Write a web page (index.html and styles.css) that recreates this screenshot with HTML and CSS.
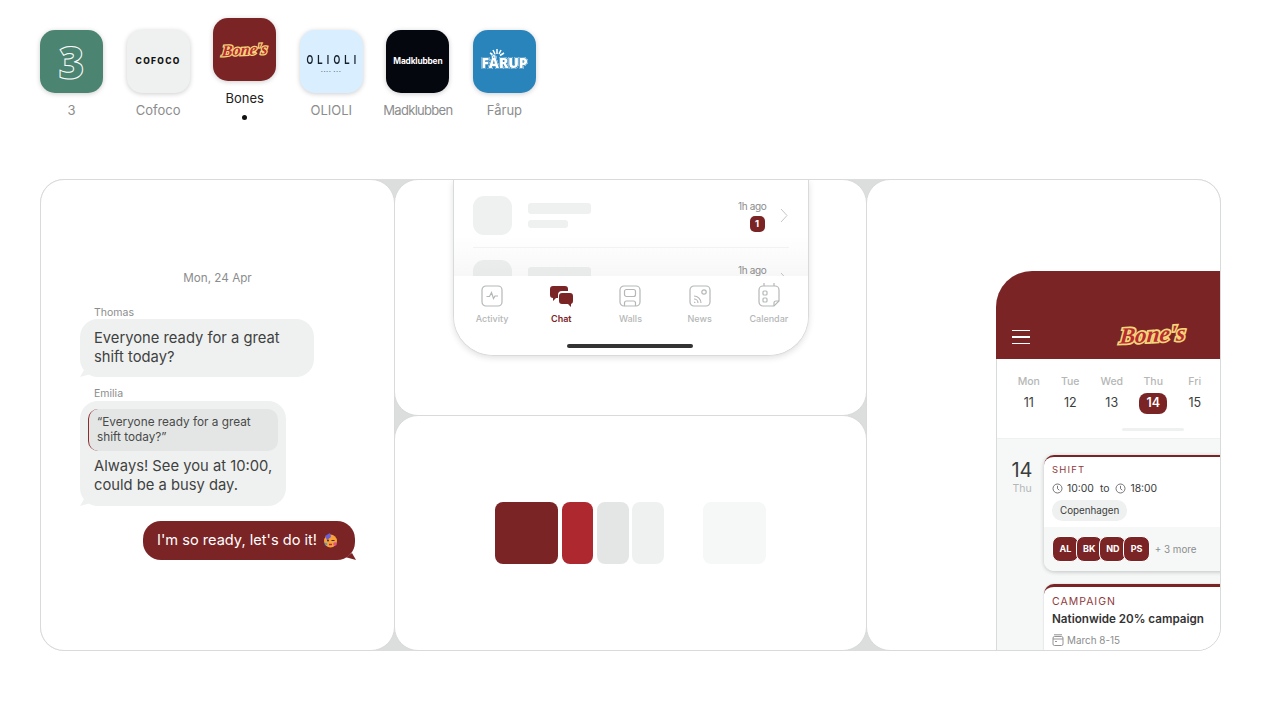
FILE: index.html
```html
<!DOCTYPE html>
<html lang="en">
<head>
<meta charset="utf-8">
<title>Brands</title>
<link rel="stylesheet" href="styles.css">
</head>
<body>
<header class="brands">
  <div class="brand">
    <div class="tile tile-three"><span class="three">3</span></div>
    <span class="brand-name">3</span>
  </div>
  <div class="brand">
    <div class="tile tile-cofoco"><span class="cofoco">COFOCO</span></div>
    <span class="brand-name">Cofoco</span>
  </div>
  <div class="brand brand-active">
    <div class="tile tile-bones"><span class="bones bones-small">Bone's</span></div>
    <span class="brand-name">Bones</span>
    <span class="brand-dot"></span>
  </div>
  <div class="brand">
    <div class="tile tile-olioli"><span class="olioli">OLIOLI</span><span class="olioli-sub">•••• •••</span></div>
    <span class="brand-name">OLIOLI</span>
  </div>
  <div class="brand">
    <div class="tile tile-mad"><span class="mad">Madklubben</span></div>
    <span class="brand-name brand-name-tight">Madklubben</span>
  </div>
  <div class="brand">
    <div class="tile tile-farup">
      <svg class="rays" width="16" height="9" viewBox="0 0 16 9"><path d="M8 1v5M4 2l2 4M12 2l-2 4M1 5l4 2.500M15 5l-4 2.500" stroke="#fff" stroke-width="1.500" fill="none"/></svg>
      <span class="farup">FÅRUP</span>
    </div>
    <span class="brand-name">Fårup</span>
  </div>
</header>

<main class="board">
  <section class="panel panel-chat">
    <div class="chat-date">Mon, 24 Apr</div>
    <div class="sender">Thomas</div>
    <div class="bubble bubble-in bubble-thomas">Everyone ready for a great shift today?</div>
    <div class="sender sender-next">Emilia</div>
    <div class="bubble bubble-in bubble-emilia">
      <div class="quote">“Everyone ready for a great shift today?”</div>
      <div class="reply">Always! See you at 10:00, could be a busy day.</div>
    </div>
    <div class="bubble bubble-out">I'm so ready, let's do it!
      <svg class="emoji" width="15" height="15" viewBox="0 0 15 15"><circle cx="7.500" cy="8" r="6.500" fill="#f7a23b"/><path d="M2 3l5-3 1 4-4 3z" fill="#6a5fd8"/><circle cx="5" cy="7.500" r="1" fill="#4a2a20"/><path d="M8.500 7.500h3" stroke="#4a2a20" stroke-width="1"/><path d="M6 11.500h3" stroke="#b0303a" stroke-width="1.500"/><circle cx="12" cy="11" r="1.800" fill="#e0508a"/><circle cx="3" cy="11" r="1.300" fill="#3fa7d6"/></svg>
    </div>
  </section>

  <div class="middle">
    <section class="panel panel-phone">
      <div class="phone">
        <div class="list-row">
          <div class="avatar"></div>
          <div class="bars"><div class="bar bar-long"></div><div class="bar bar-short"></div></div>
          <div class="meta"><span class="ago">1h ago</span><span class="badge">1</span></div>
          <svg class="chev" width="8" height="15" viewBox="0 0 8 15"><path d="M1 1l6 6.500-6 6.500" fill="none" stroke="#c4c6c6" stroke-width="1"/></svg>
        </div>
        <div class="list-row list-row-next">
          <div class="avatar"></div>
          <div class="bars"><div class="bar bar-long"></div><div class="bar bar-short"></div></div>
          <div class="meta"><span class="ago">1h ago</span><span class="badge">1</span></div>
          <svg class="chev" width="8" height="15" viewBox="0 0 8 15"><path d="M1 1l6 6.500-6 6.500" fill="none" stroke="#c4c6c6" stroke-width="1"/></svg>
        </div>
        <div class="fade"></div>
        <nav class="tabs">
          <div class="tab">
            <svg width="24" height="24" viewBox="0 0 24 24" fill="none" stroke="#b5b7b7" stroke-width="1.200"><rect x="2" y="2" width="20" height="20" rx="4"/><path d="M6.500 12.500h3l2-4 2 6 1.500-2.500h3"/></svg>
            <span>Activity</span>
          </div>
          <div class="tab tab-on">
            <svg width="24" height="24" viewBox="0 0 24 24" fill="#7b2426"><path d="M4 2h12a3 3 0 0 1 3 3v2h-6a4 4 0 0 0-4 4v3H7l-3 3v-3a3 3 0 0 1-3-3V5a3 3 0 0 1 3-3z"/><path d="M13 9h8a3 3 0 0 1 3 3v5a3 3 0 0 1-2 3v3l-3-3h-6a3 3 0 0 1-3-3v-5a3 3 0 0 1 3-3z"/></svg>
            <span>Chat</span>
          </div>
          <div class="tab">
            <svg width="24" height="24" viewBox="0 0 24 24" fill="none" stroke="#b5b7b7" stroke-width="1.200"><rect x="2" y="2" width="20" height="20" rx="4"/><rect x="6.500" y="5.500" width="11" height="7" rx="2"/><path d="M6.500 22v-3a2 2 0 0 1 2-2h7a2 2 0 0 1 2 2v3"/></svg>
            <span>Walls</span>
          </div>
          <div class="tab">
            <svg width="24" height="24" viewBox="0 0 24 24" fill="none" stroke="#b5b7b7" stroke-width="1.200"><rect x="2" y="2" width="20" height="20" rx="4"/><circle cx="16" cy="8" r="2.200"/><path d="M6 12a7 7 0 0 1 7 7M6 15a4 4 0 0 1 4 4M6 18a1 1 0 0 1 1 1"/></svg>
            <span>News</span>
          </div>
          <div class="tab">
            <svg width="24" height="24" viewBox="0 0 24 24" fill="none" stroke="#b5b7b7" stroke-width="1.200"><path d="M6 2h12a4 4 0 0 1 4 4v11l-5 5H6a4 4 0 0 1-4-4V6a4 4 0 0 1 4-4z"/><path d="M7 -1v3M17 -1v3M22 17h-3a2 2 0 0 0-2 2v3"/><rect x="6" y="7" width="4" height="4" rx="1"/><rect x="6" y="14" width="4" height="4" rx="1"/></svg>
            <span>Calendar</span>
          </div>
        </nav>
        <div class="home-bar"></div>
      </div>
    </section>

    <section class="panel panel-swatches">
      <div class="swatch sw-primary"></div>
      <div class="swatch sw-accent"></div>
      <div class="swatch sw-grey"></div>
      <div class="swatch sw-light"></div>
      <div class="swatch sw-white"></div>
      <div class="swatch sw-pale"></div>
    </section>
  </div>

  <section class="panel panel-calendar">
    <div class="cal-phone">
      <div class="cal-head">
        <div class="burger"><i></i><i></i><i></i></div>
        <span class="bones bones-large">Bone's</span>
      </div>
      <div class="week">
        <div class="day"><span class="day-name">Mon</span><span class="day-num">11</span></div>
        <div class="day"><span class="day-name">Tue</span><span class="day-num">12</span></div>
        <div class="day"><span class="day-name">Wed</span><span class="day-num">13</span></div>
        <div class="day"><span class="day-name">Thu</span><span class="day-num day-on">14</span></div>
        <div class="day"><span class="day-name">Fri</span><span class="day-num">15</span></div>
      </div>
      <div class="scroller"><div class="scroller-thumb"></div></div>
      <div class="agenda">
        <div class="agenda-date"><span class="agenda-num">14</span><span class="agenda-day">Thu</span></div>
        <div class="cards">
          <article class="card">
            <div class="card-body">
              <div class="card-kind">SHIFT</div>
              <div class="times">
                <svg width="11" height="11" viewBox="0 0 11 11" fill="none" stroke="#666" stroke-width=".9"><circle cx="5.500" cy="5.500" r="4.500"/><path d="M5.500 2.800v2.900l1.800 1.500"/></svg>
                <span>10:00</span><span class="to">to</span>
                <svg width="11" height="11" viewBox="0 0 11 11" fill="none" stroke="#666" stroke-width=".9"><circle cx="5.500" cy="5.500" r="4.500"/><path d="M5.500 2.800v2.900l1.800 1.500"/></svg>
                <span>18:00</span>
              </div>
              <span class="place">Copenhagen</span>
            </div>
            <div class="card-foot">
              <span class="person">AL</span><span class="person">BK</span><span class="person">ND</span><span class="person">PS</span>
              <span class="more">+ 3 more</span>
            </div>
          </article>
          <article class="card card-second">
            <div class="card-body">
              <div class="card-kind card-kind-large">CAMPAIGN</div>
              <div class="card-title">Nationwide 20% campaign</div>
              <div class="dates">
                <svg width="12" height="12" viewBox="0 0 12 12" fill="none" stroke="#888" stroke-width=".9"><rect x="1" y="2.500" width="10" height="9" rx="1.500"/><path d="M2 .8h8M1 5h10M3 7.500h2"/></svg>
                <span>March 8-15</span>
              </div>
            </div>
          </article>
        </div>
      </div>
    </div>
  </section>
</main>
</body>
</html>
```
FILE: styles.css
```css
* { box-sizing: border-box; }
html, body { margin: 0; padding: 0; }
body {
  background: #fff;
  font-family: Inter, "Noto Sans", sans-serif;
  color: #3b3d3d;
  height: 701px;
  overflow: hidden;
}

/* Brand row */
.brands {
  display: flex;
  gap: 23.600px;
  height: 179px;
  padding: 30px 0 0 40px;
}
.brand {
  width: 63px;
  display: flex;
  flex-direction: column;
  align-items: center;
  white-space: nowrap;
}
.brand-active { margin-top: -12px; }
.tile {
  width: 63px;
  height: 63px;
  flex: none;
  border-radius: 15px;
  box-shadow: 0 1px 5px rgba(0,0,0,.2);
  display: flex;
  flex-direction: column;
  align-items: center;
  justify-content: center;
  overflow: hidden;
}
.brand-name {
  margin-top: 8.500px;
  font-size: 13px;
  line-height: 16px;
  color: #8b8d8d;
}
.brand-name-tight { letter-spacing: -.7px; }
.brand-active .brand-name { color: #222; }
.brand-dot {
  width: 5px;
  height: 5px;
  margin-top: 9px;
  border-radius: 50%;
  background: #111;
}
.tile-three { background: #4c8472; }
.three {
  font: 800 44px/1 "Open Sans", sans-serif;
  color: transparent;
  -webkit-text-stroke: 1px #fff;
}
.tile-cofoco { background: #eff1f0; }
.cofoco { font: 800 8.500px/1 Inter, sans-serif; letter-spacing: 1.300px; color: #111; }
.tile-bones { background: #7b2426; }
.bones {
  font-family: "Liberation Serif", serif;
  font-style: italic;
  font-weight: 700;
  color: #b72b30;
  paint-order: stroke fill;
  transform: skewX(-8deg) rotate(-3deg);
}
.bones-small { font-size: 16px; -webkit-text-stroke: 2.500px #f3d57a; }
.bones-large { font-size: 23px; -webkit-text-stroke: 3.500px #f3d57a; }
.tile-olioli { background: #d9eeff; }
.olioli { font: 700 12px/1 "Liberation Sans", sans-serif; letter-spacing: 5.800px; color: #15202b; transform: scaleX(.72); margin-top: 3px; margin-right: -5px; }
.olioli-sub { font-size: 3px; line-height: 4px; letter-spacing: 1px; color: #555; margin-top: 3px; }
.tile-mad { background: #05070f; }
.mad { font: 700 8.300px/1 Inter, sans-serif; letter-spacing: -.15px; color: #fff; }
.tile-farup { background: #2a84bc; }
.rays { margin: 0 14px -1px 0; }
.farup {
  font: 800 14px/1 "Open Sans", sans-serif;
  color: #fff;
  -webkit-text-stroke: 1.500px #2a84bc;
  paint-order: stroke fill;
  filter: drop-shadow(0 0 .7px #fff) drop-shadow(0 0 .7px #fff);
  letter-spacing: -.1px;
  margin-bottom: 6px;
}

/* Board */
.board {
  width: 1181px;
  height: 472px;
  margin-left: 40px;
  display: flex;
  border-radius: 24px;
  background: #dcdedd;
}
.panel {
  background: #fff;
  border: 1px solid #d9dbda;
  border-radius: 24px;
  overflow: hidden;
}
.panel-chat {
  width: 355px;
  flex: none;
  padding: 91px 39px 0;
  display: flex;
  flex-direction: column;
  align-items: flex-start;
}
.middle {
  width: 473px;
  flex: none;
  margin: 0 -1px;
  display: flex;
  flex-direction: column;
}
.panel-phone { height: 237px; flex: none; }
.panel-swatches {
  height: 236px;
  margin-top: -1px;
  flex: none;
  display: flex;
  justify-content: center;
  align-items: flex-start;
  gap: 3.500px;
  padding-top: 86px;
}
.panel-calendar {
  width: 355px;
  flex: none;
  padding: 91px 0 0 129px;
}

/* Chat */
.chat-date {
  align-self: center;
  font-size: 11.700px;
  line-height: 15px;
  color: #8b8d8d;
}
.sender {
  margin: 20px 0 0 14px;
  font-size: 10.500px;
  line-height: 14px;
  color: #8b8d8d;
}
.sender-next { margin-top: 10px; }
.bubble {
  position: relative;
  font-size: 14.750px;
  line-height: 19px;
  border-radius: 18px;
  padding: 10px 14px;
}
.bubble-in { background: #eff1f0; margin-top: -1px; color: #3f4141; }
.bubble-in::after {
  content: "";
  position: absolute;
  left: 0;
  bottom: 0;
  width: 10px;
  height: 7px;
  background: #eff1f0;
  clip-path: polygon(0 100%, 40% 0, 100% 60%);
}
.bubble-thomas { width: 234px; height: 58px; }
.bubble-emilia { width: 206px; height: 105px; padding: 8px 8px 0; margin-top: 0; }
.reply { padding: 6px 0 0 6px; }
.quote {
  background: #e4e6e5;
  border-left: 1px solid #8f2a2e;
  border-radius: 10px;
  height: 42px;
  padding: 6px 8px 0;
  font-size: 11.800px;
  line-height: 15px;
  color: #484a4a;
}
.bubble-out {
  align-self: flex-end;
  width: 212px;
  height: 39px;
  margin-top: 15px;
  padding: 9px 14px;
  font-size: 14.600px;
  white-space: nowrap;
  background: #7b2426;
  color: #fff;
  display: flex;
  align-items: center;
  gap: 6px;
}
.bubble-out::after {
  content: "";
  position: absolute;
  right: -1px;
  bottom: 0;
  width: 10px;
  height: 7px;
  background: #7b2426;
  clip-path: polygon(100% 100%, 60% 0, 0 60%);
}
.emoji { flex: none; }

/* Chat list phone */
.phone {
  position: relative;
  width: 356px;
  height: 176px;
  margin: 0 auto;
  background: #fff;
  border: 1px solid #d9dbda;
  border-top: 0;
  border-radius: 0 0 40px 40px;
  box-shadow: 0 2px 6px rgba(0,0,0,.12);
  padding: 16px 19px 0;
  overflow: hidden;
}
.list-row {
  display: flex;
  align-items: flex-start;
  height: 52px;
  border-bottom: 1px solid #f3f4f4;
}
.list-row-next { margin-top: 12px; border: 0; }
.avatar {
  width: 39px;
  height: 39px;
  flex: none;
  border-radius: 11px;
  background: #eff1f0;
}
.bars { margin: 7px 0 0 16px; flex: 1; }
.bar { background: #eff1f0; border-radius: 3px; }
.bar-long { width: 63px; height: 11px; }
.bar-short { width: 40px; height: 8px; margin-top: 6px; }
.meta {
  display: flex;
  flex-direction: column;
  align-items: flex-end;
  margin-top: 4px;
}
.ago { font-size: 10px; line-height: 13px; letter-spacing: -.35px; color: #8b8d8d; }
.badge {
  width: 15px;
  height: 16px;
  margin: 3px 2px 0 0;
  border-radius: 5px;
  background: #7b2426;
  color: #fff;
  font-size: 9.500px;
  font-weight: 700;
  line-height: 16px;
  text-align: center;
}
.chev { margin: 12px 1px 0 13px; flex: none; }
.fade {
  position: absolute;
  left: 0;
  right: 0;
  top: 56px;
  height: 40px;
  background: linear-gradient(rgba(120,125,125,0), rgba(120,125,125,.06));
}
.tabs {
  position: absolute;
  left: 0;
  right: 0;
  top: 96px;
  height: 80px;
  background: #fff;
  display: grid;
  grid-template-columns: repeat(5, 69.200px);
  padding: 8px 0 0 4px;
}
.tab {
  display: flex;
  flex-direction: column;
  align-items: center;
  font-size: 9px;
  font-weight: 500;
  line-height: 12px;
  color: #b5b7b7;
}
.tab svg { overflow: visible; }
.tab span { margin-top: 5px; }
.tab-on { color: #7b2426; font-weight: 600; }
.home-bar {
  position: absolute;
  left: 113px;
  top: 164px;
  width: 126px;
  height: 4px;
  border-radius: 2px;
  background: #333;
}

/* Swatches */
.swatch { height: 62px; border-radius: 8px; flex: none; }
.sw-primary { width: 63px; background: #7b2426; }
.sw-accent { width: 31.500px; background: #ae2830; }
.sw-grey { width: 32px; background: #e4e6e5; }
.sw-light { width: 32px; background: #eff1f0; }
.sw-white { width: 32px; background: #fff; }
.sw-pale { width: 63px; background: #f6f8f7; }

/* Calendar phone */
.cal-phone {
  width: 400px;
  height: 420px;
  background: #fff;
  border-left: 1px solid #d9dbda;
  border-top-left-radius: 36px;
}
.cal-head {
  height: 88px;
  margin-left: -1px;
  background: #7b2426;
  border-top-left-radius: 36px;
  display: flex;
  align-items: flex-end;
  padding: 0 0 9px 16px;
}
.burger { display: flex; flex-direction: column; gap: 5px; margin-bottom: 6px; }
.burger i { display: block; width: 18px; height: 1.500px; background: #fff; }
.bones-large { margin-left: 90px; line-height: 30px; }
.week {
  display: grid;
  grid-template-columns: repeat(5, 41.500px);
  padding: 16px 0 0 11px;
  height: 69px;
}
.day { display: flex; flex-direction: column; align-items: center; }
.day-name { font-size: 10.500px; font-weight: 500; line-height: 13px; color: #b5b7b7; }
.day-num {
  width: 28px;
  height: 21px;
  margin-top: 5px;
  border-radius: 8px;
  font-size: 12.500px;
  line-height: 20px;
  text-align: center;
  color: #3b3d3d;
}
.day-on { background: #7b2426; color: #fff; font-weight: 600; }
.scroller { height: 11px; padding-left: 125px; border-bottom: 1px solid #eff1f0; }
.scroller-thumb { width: 62px; height: 3px; border-radius: 2px; background: #eff1f0; }
.agenda {
  display: flex;
  height: 220px;
  background: #f6f8f7;
  padding: 16px 0 0 0;
}
.agenda-date {
  width: 47px;
  flex: none;
  display: flex;
  flex-direction: column;
  align-items: center;
  padding: 3px 0 0 3px;
}
.agenda-num { font-size: 20px; line-height: 24px; font-weight: 400; color: #3b3d3d; }
.agenda-day { font-size: 10.500px; line-height: 13px; color: #b5b7b7; }
.cards { width: 300px; flex: none; }
.card {
  background: #fff;
  border-top: 2px solid #7b2426;
  border-radius: 10px 0 0 10px;
  box-shadow: 0 1px 4px rgba(0,0,0,.22);
  height: 116px;
  overflow: hidden;
}
.card-body { padding: 7px 8px 0; height: 70px; }
.card-kind { font-size: 9.500px; line-height: 12px; letter-spacing: 1.200px; color: #8f3a3c; }
.times {
  display: flex;
  align-items: center;
  gap: 4px;
  margin-top: 5px;
  font-size: 10.400px;
  line-height: 15px;
  color: #3b3d3d;
}
.to { margin: 0 2px; }
.place {
  display: inline-block;
  margin-top: 4px;
  height: 21px;
  padding: 0 8px;
  border-radius: 10px;
  background: #eff1f0;
  font-size: 9.800px;
  line-height: 21px;
}
.card-foot {
  height: 44px;
  background: #f6f8f7;
  display: flex;
  align-items: center;
  padding-left: 8px;
}
.person {
  width: 27px;
  height: 26px;
  margin-right: -3.300px;
  border-radius: 8px;
  background: #7b2426;
  border: 1px solid #fff;
  color: #fff;
  font-size: 9px;
  font-weight: 700;
  line-height: 24px;
  text-align: center;
}
.more { margin-left: 8px; font-size: 9.800px; color: #8b8d8d; }
.card-second { margin-top: 13px; height: 100px; border-top-width: 3px; box-shadow: 0 0 2px rgba(0,0,0,.2); }
.card-kind-large { font-size: 10.500px; line-height: 13px; letter-spacing: 1px; margin-top: 1px; }
.card-title { margin-top: 3px; font-size: 11.650px; font-weight: 600; line-height: 16px; color: #333; }
.dates {
  display: flex;
  align-items: center;
  gap: 3px;
  margin-top: 6px;
  font-size: 9.900px;
  line-height: 14px;
  color: #8b8d8d;
}
```
